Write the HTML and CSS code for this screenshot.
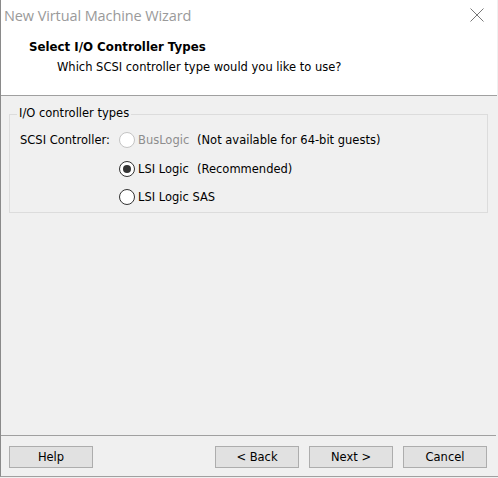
FILE: index.html
```html
<!DOCTYPE html>
<html>
<head>
<meta charset="utf-8">
<link rel="stylesheet" href="styles.css">
</head>
<body>
<div class="window">
  <div class="header">
    <div class="titlebar">
      <span class="title">New Virtual Machine Wizard</span>
      <svg class="close" width="14" height="14" viewBox="0 0 14 14"><path d="M0.5 0.5 L13.5 13.5 M13.5 0.5 L0.5 13.5" stroke="#777" stroke-width="1" fill="none"/></svg>
    </div>
    <div class="heading">Select I/O Controller Types</div>
    <div class="subheading">Which SCSI controller type would you like to use?</div>
  </div>
  <div class="body">
    <div class="group">
      <div class="legend">I/O controller types</div>
      <div class="group-inner">
        <div class="label">SCSI Controller:</div>
        <div class="options">
          <div class="option disabled"><span class="radio"></span><span class="name">BusLogic</span><span class="note">(Not available for 64-bit guests)</span></div>
          <div class="option"><span class="radio checked"></span><span class="name">LSI Logic</span><span class="note">(Recommended)</span></div>
          <div class="option"><span class="radio"></span><span class="name">LSI Logic SAS</span></div>
        </div>
      </div>
    </div>
  </div>
  <div class="footer">
    <button class="btn">Help</button>
    <div class="spacer"></div>
    <button class="btn">&lt; Back</button>
    <button class="btn">Next &gt;</button>
    <button class="btn">Cancel</button>
  </div>
</div>
</body>
</html>
```

FILE: styles.css
```css
* { box-sizing: border-box; }
html, body { margin: 0; padding: 0; background: #f0f0f0; }
body { width: 498px; height: 478px; overflow: hidden; font-family: "DejaVu Sans", sans-serif; font-size: 11.5px; color: #000; }
.window {
  width: 498px; height: 477px;
  border-left: 1px solid #8a8a8a;
  border-bottom: 1px solid #a0a0a0;
  background: #f0f0f0;
  display: flex; flex-direction: column;
}
.header {
  background: #ffffff;
  height: 96px;
  border-bottom: 1px solid #a0a0a0;
  margin-right: 1px;
}
.titlebar {
  height: 40px;
  display: flex; align-items: flex-start; justify-content: space-between;
  padding: 6px 13px 0 3px;
}
.title { font-family: "Open Sans", sans-serif; font-size: 14.5px; color: #9a9a9a; line-height: 20px; letter-spacing: -0.1px; }
.close { margin-top: 2px; }
.heading {
  font-weight: bold; font-size: 11.8px;
  padding-left: 28px; line-height: 14px;
}
.subheading {
  padding-left: 56px; margin-top: 6px; line-height: 14px;
}
.body { flex: 1; padding: 18px 9px 0 8px; }
.group {
  position: relative;
  border: 1px solid #dcdcdc;
  height: 99px;
  margin-right: 1px;
}
.legend {
  position: absolute; top: -10px; left: 7px;
  background: #f0f0f0; padding: 0 2px;
  line-height: 16px;
}
.group-inner { display: flex; padding: 17px 0 0 10px; }
.label { width: 99px; line-height: 16px; }
.options { display: flex; flex-direction: column; gap: 12.5px; }
.option { display: flex; align-items: center; height: 16px; white-space: nowrap; }
.radio {
  width: 16px; height: 16px; border-radius: 50%;
  border: 1px solid #333; background: #fff;
  display: inline-flex; align-items: center; justify-content: center;
  margin-right: 3px; flex: none;
}
.radio.checked::after { content: ""; width: 8px; height: 8px; border-radius: 50%; background: #333; }
.disabled .radio { border-color: #c4c4c4; }
.disabled .name { color: #8d8d8d; }
.name { min-width: 56px; }
.note { margin-left: 3px; }
.footer {
  border-top: 1px solid #a0a0a0;
  height: 41px;
  margin-right: 2px;
  display: flex; align-items: flex-start; padding: 10px 9px 0 8px; gap: 10px;
}
.spacer { flex: 1; }
.btn {
  width: 84px; height: 22px;
  background: #e1e1e1; border: 1px solid #adadad;
  font-family: "DejaVu Sans", sans-serif; font-size: 11.5px; color: #000;
  padding: 0; margin: 0;
}
```
